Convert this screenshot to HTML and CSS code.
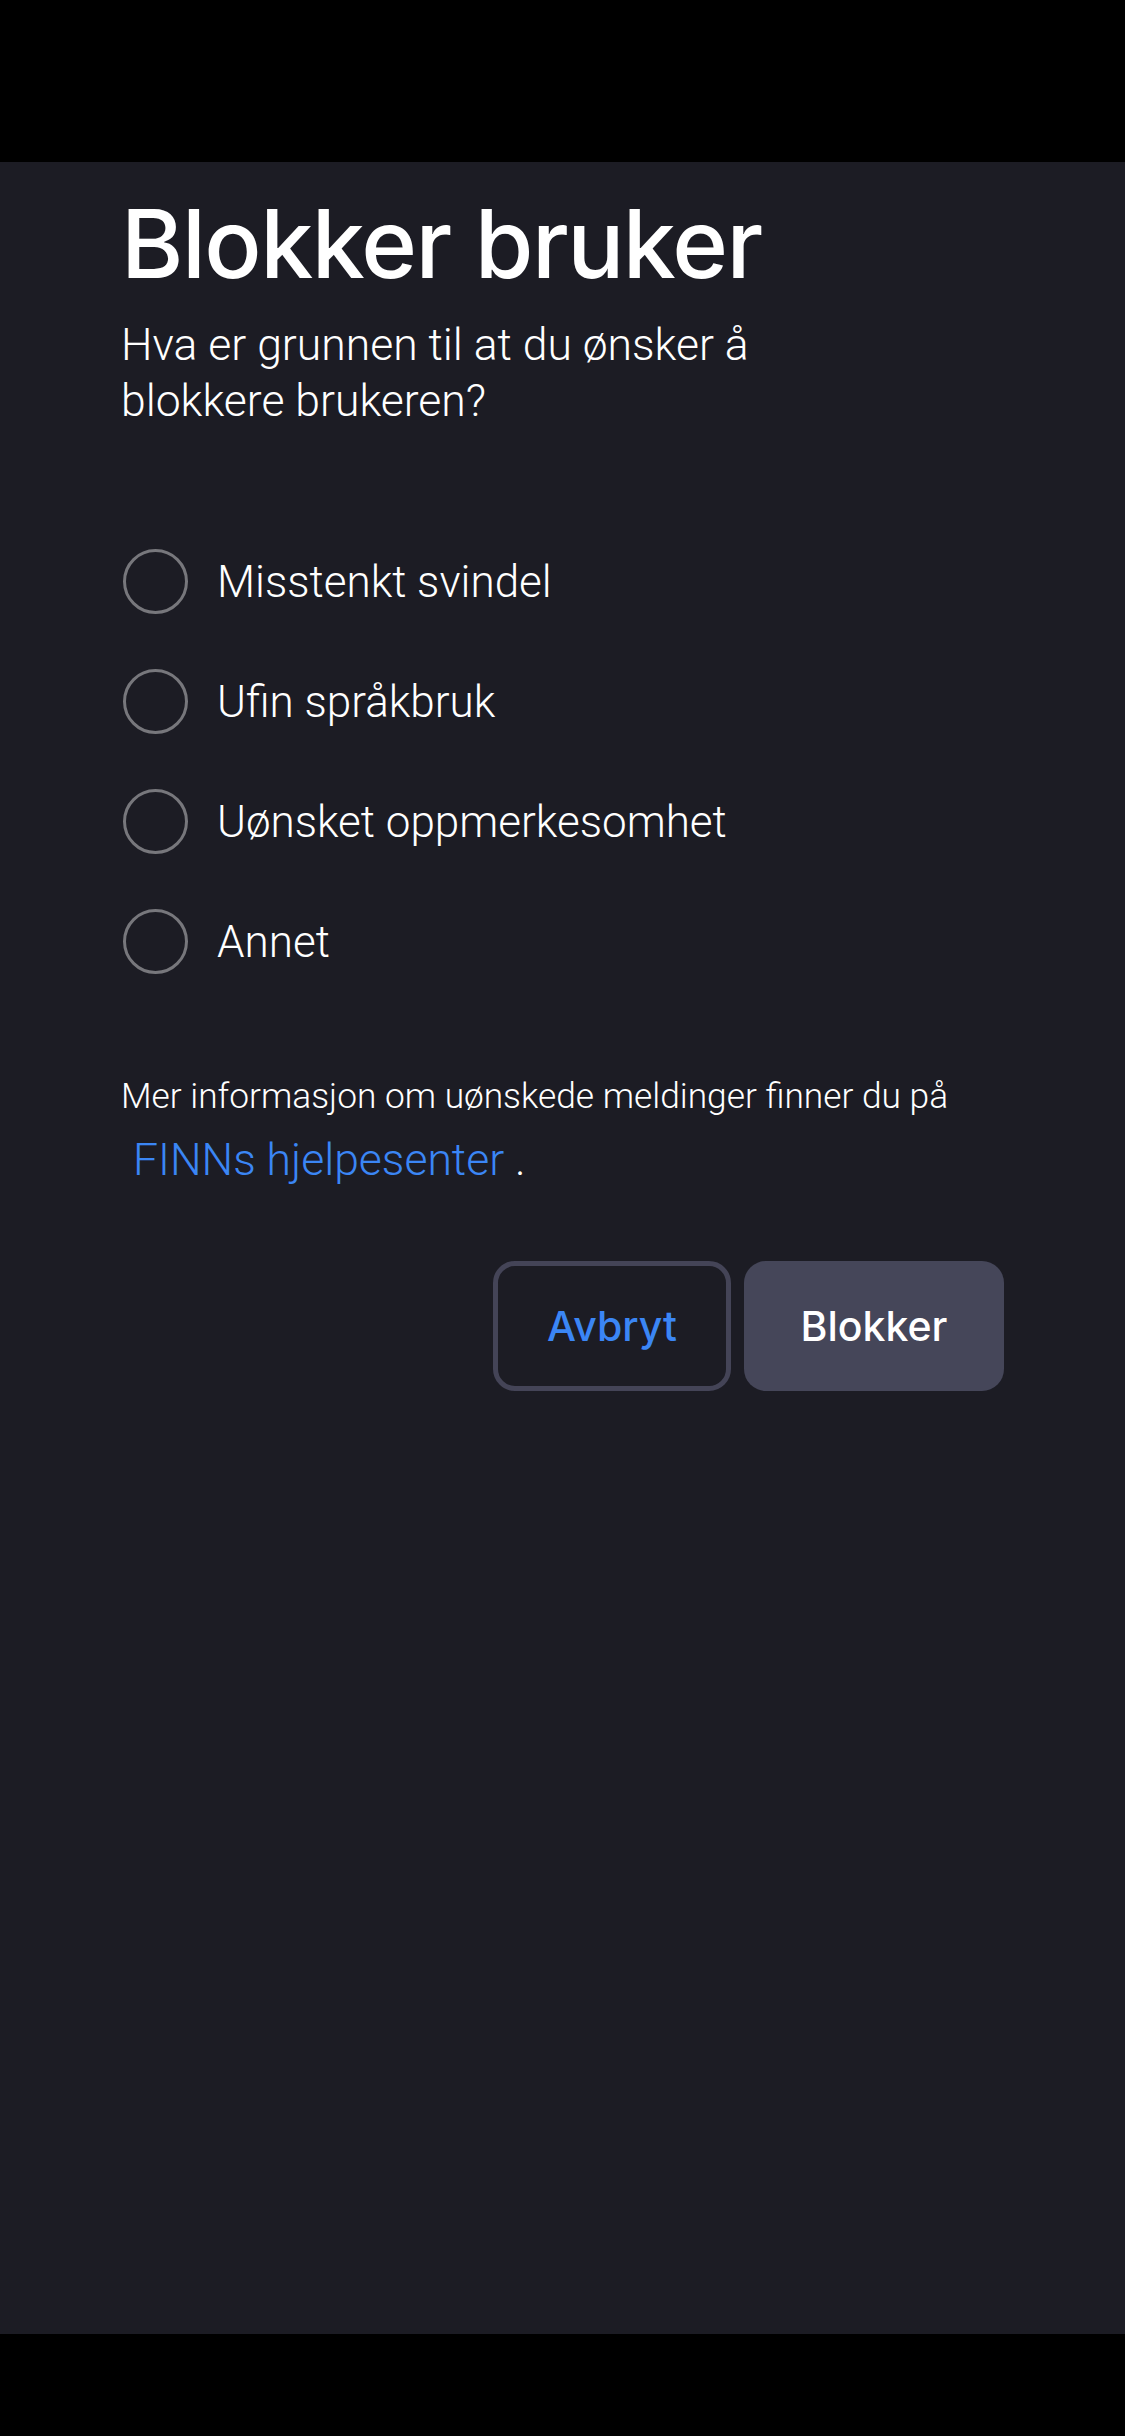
FILE: index.html
```html
<!DOCTYPE html>
<html lang="no">
<head>
<meta charset="utf-8">
<title>Blokker bruker</title>
<link rel="stylesheet" href="styles.css">
</head>
<body>
<div class="topbar"></div>
<main class="sheet">
  <h1 class="title">Blokker bruker</h1>
  <p class="subtitle">Hva er grunnen til at du ønsker å blokkere brukeren?</p>
  <ul class="options">
    <li class="option"><span class="radio"></span><span class="label">Misstenkt svindel</span></li>
    <li class="option"><span class="radio"></span><span class="label">Ufin språkbruk</span></li>
    <li class="option"><span class="radio"></span><span class="label">Uønsket oppmerkesomhet</span></li>
    <li class="option"><span class="radio"></span><span class="label">Annet</span></li>
  </ul>
  <p class="info">Mer informasjon om uønskede meldinger finner du på</p>
  <p class="linkline"><a class="link" href="#">FINNs hjelpesenter</a> .</p>
  <div class="actions">
    <button class="btn btn-cancel">Avbryt</button>
    <button class="btn btn-block">Blokker</button>
  </div>
</main>
<div class="bottombar"></div>
</body>
</html>
```
FILE: styles.css
```css
* { box-sizing: border-box; }
html, body { margin: 0; padding: 0; background: #000; }
body { width: 1125px; height: 2436px; display: flex; flex-direction: column; }
.topbar { height: 162px; background: #000; flex: none; }
.bottombar { height: 102px; background: #000; flex: none; }
.sheet {
  flex: 1;
  background: #1c1c24;
  padding: 22px 121px 0 121px;
  display: flex;
  flex-direction: column;
  color: #fff;
}
.title {
  margin: 0;
  font-family: Inter, "Noto Sans", sans-serif;
  font-weight: 500;
  font-size: 95px;
  line-height: 120px;
  letter-spacing: -1.5px;
}
.subtitle {
  margin: 13px 0 0 0;
  max-width: 700px;
  font-family: Roboto, "Noto Sans", sans-serif;
  font-weight: 300;
  font-size: 44.5px;
  line-height: 56px;
}
.options {
  list-style: none;
  margin: 120px 0 0 0;
  padding: 0;
  display: flex;
  flex-direction: column;
  gap: 55px;
}
.option {
  display: flex;
  align-items: center;
  height: 65px;
  gap: 29px;
  padding-left: 2px;
}
.radio {
  width: 65px;
  height: 65px;
  border-radius: 50%;
  border: 3px solid #77777c;
  flex: none;
}
.label {
  font-family: Roboto, "Noto Sans", sans-serif;
  font-weight: 300;
  font-size: 44px;
}
.info {
  margin: 100px 0 0 0;
  font-family: Roboto, "Noto Sans", sans-serif;
  font-weight: 300;
  font-size: 35.3px;
  line-height: 44px;
}
.linkline {
  margin: 15px 0 0 0;
  padding-left: 12px;
  font-family: Roboto, "Noto Sans", sans-serif;
  font-weight: 300;
  font-size: 44.5px;
  line-height: 54px;
}
.link { color: #3b86f5; text-decoration: none; }
.actions {
  margin-top: 74px;
  display: flex;
  justify-content: flex-end;
  gap: 13px;
}
.btn {
  height: 130px;
  border-radius: 22px;
  font-family: Inter, "Noto Sans", sans-serif;
  font-weight: 500;
  font-size: 41px;
}
.btn-cancel {
  width: 238px;
  background: transparent;
  border: 5px solid #444457;
  color: #3b86f5;
}
.btn-block {
  width: 260px;
  background: #454659;
  border: none;
  color: #fff;
}
```
